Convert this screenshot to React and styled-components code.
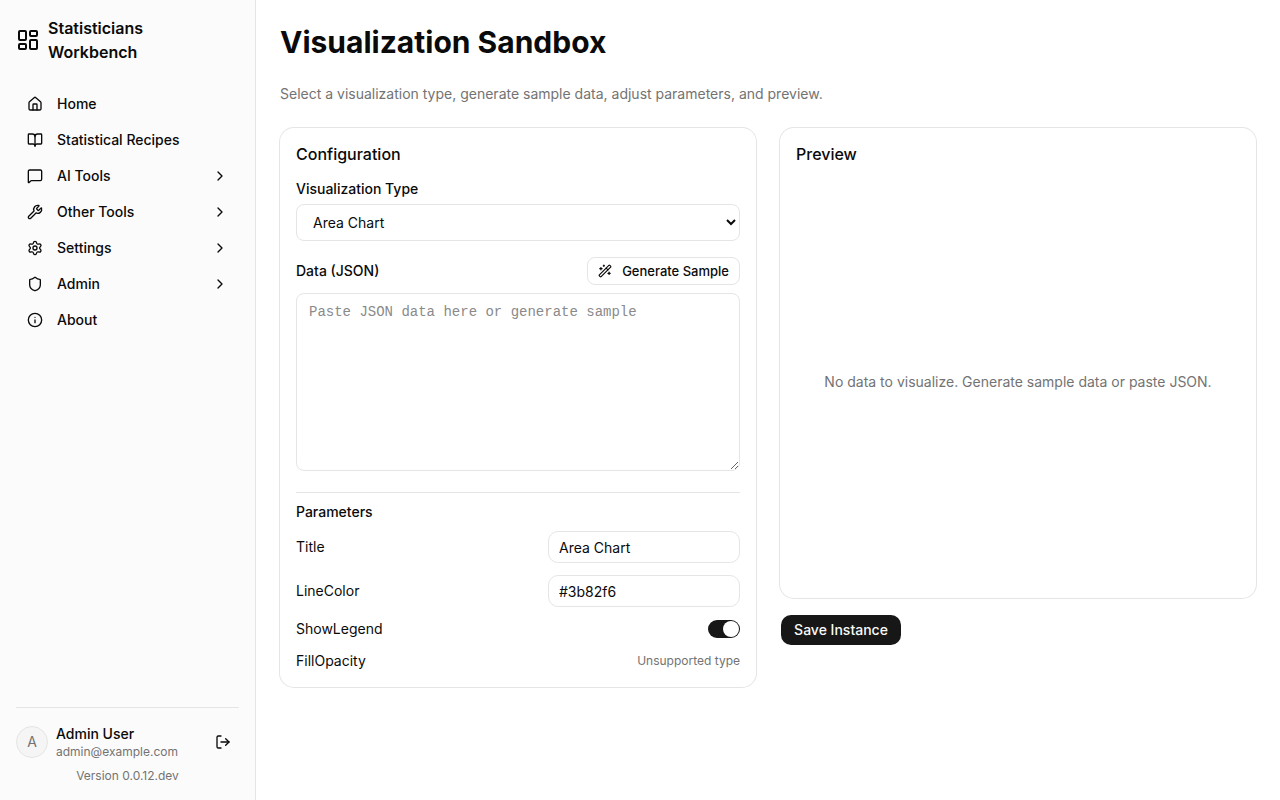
import { useState } from "react";
import styled, { createGlobalStyle } from "styled-components";
import {
  LayoutDashboard,
  House,
  BookOpen,
  MessageSquare,
  Wrench,
  Settings,
  Shield,
  Info,
  ChevronRight,
  LogOut,
  WandSparkles,
} from "lucide-react";

const GlobalStyle = createGlobalStyle`
  * {
    box-sizing: border-box;
  }
  body {
    margin: 0;
    background: #ffffff;
    color: #0a0a0a;
    font-family: Inter, "Liberation Sans", sans-serif;
    font-size: 14px;
    line-height: 20px;
  }
  button, input, select {
    font-family: inherit;
    color: inherit;
  }
`;

const Page = styled.div`
  display: flex;
  min-height: 100vh;
`;

const Sidebar = styled.aside`
  position: sticky;
  top: 0;
  width: 256px;
  height: 100vh;
  flex-shrink: 0;
  display: flex;
  flex-direction: column;
  padding: 16px;
  background: #fbfbfb;
  border-right: 1px solid #e5e5e5;
`;

const Brand = styled.a`
  display: flex;
  align-items: center;
  gap: 8px;
  padding-right: 32px;
  color: inherit;
  text-decoration: none;
  font-size: 16px;
  font-weight: 600;
  line-height: 24px;
  svg {
    flex-shrink: 0;
  }
`;

const Nav = styled.nav`
  display: flex;
  flex-direction: column;
  gap: 4px;
  margin-top: 24px;
`;

const NavLink = styled.a`
  display: flex;
  align-items: center;
  gap: 14px;
  height: 32px;
  padding: 0 11px;
  border-radius: 8px;
  color: inherit;
  text-decoration: none;
  font-weight: 500;
`;

const NavLabel = styled.span`
  flex: 1;
`;

const SidebarFooter = styled.div`
  margin-top: auto;
  padding-top: 16px;
  border-top: 1px solid #e5e5e5;
`;

const User = styled.div`
  display: flex;
  align-items: center;
  gap: 8px;
`;

const Avatar = styled.span`
  display: flex;
  align-items: center;
  justify-content: center;
  width: 32px;
  height: 32px;
  border: 1px solid #e5e5e5;
  border-radius: 50%;
  background: #f5f5f5;
  color: #737373;
`;

const UserInfo = styled.div`
  flex: 1;
  display: flex;
  flex-direction: column;
`;

const UserName = styled.span`
  font-weight: 500;
`;

const Muted = styled.span`
  color: #737373;
  font-size: 12px;
  line-height: 16px;
`;

const IconButton = styled.button`
  display: flex;
  align-items: center;
  justify-content: center;
  width: 32px;
  height: 32px;
  padding: 0;
  border: none;
  background: transparent;
  cursor: pointer;
`;

const Version = styled.div`
  margin-top: 8px;
  color: #737373;
  font-size: 12px;
  line-height: 16px;
  text-align: center;
`;

const Main = styled.main`
  flex: 1;
  min-width: 0;
  padding: 24px;
`;

const Title = styled.h1`
  margin: 0;
  font-size: 30px;
  font-weight: 700;
  line-height: 36px;
`;

const Subtitle = styled.p`
  margin: 24px 0;
  color: #737373;
`;

const Columns = styled.div`
  display: grid;
  grid-template-columns: 1fr 1fr;
  align-items: start;
  gap: 24px;
`;

const Card = styled.section`
  padding: 16px;
  border-radius: 14px;
  box-shadow: 0 0 0 1px #e5e5e5;
`;

const CardTitle = styled.h2`
  margin: 0;
  font-size: 16px;
  font-weight: 500;
  line-height: 20px;
`;

const Field = styled.div`
  display: flex;
  flex-direction: column;
  gap: ${(props) => props.$gap}px;
  margin-top: ${(props) => props.$top}px;
`;

const Label = styled.label`
  font-weight: 500;
`;

const Select = styled.select`
  width: 100%;
  height: 37px;
  padding: 0 0 0 12px;
  border: 1px solid #e5e5e5;
  border-radius: 8px;
  background: #ffffff;
  font-size: 14px;
`;

const FieldHeader = styled.div`
  display: flex;
  align-items: center;
  justify-content: space-between;
`;

const OutlineButton = styled.button`
  display: flex;
  align-items: center;
  gap: 10px;
  height: 28px;
  padding: 0 10px;
  border: 1px solid #e5e5e5;
  border-radius: 8px;
  background: #ffffff;
  font-size: 13px;
  font-weight: 500;
  cursor: pointer;
`;

const TextArea = styled.textarea`
  display: block;
  width: 100%;
  height: 178px;
  padding: 8px 12px;
  border: 1px solid #e5e5e5;
  border-radius: 8px;
  background: #ffffff;
  color: inherit;
  font-family: "Liberation Mono", monospace;
  font-size: 14px;
  line-height: 20px;
  resize: vertical;
  &::placeholder {
    color: #8a8a8a;
  }
`;

const Parameters = styled.div`
  display: flex;
  flex-direction: column;
  gap: 12px;
  margin-top: 21px;
  padding-top: 9px;
  border-top: 1px solid #e5e5e5;
`;

const ParametersTitle = styled.h3`
  margin: 0 0 -3px;
  font-size: 14px;
  font-weight: 500;
  line-height: 20px;
`;

const ParamRow = styled.div`
  display: flex;
  align-items: center;
  justify-content: space-between;
`;

const TextInput = styled.input`
  width: 192px;
  height: 32px;
  padding: 0 10px;
  border: 1px solid #e5e5e5;
  border-radius: 10px;
  background: #ffffff;
  font-size: 14px;
`;

const Switch = styled.input`
  appearance: none;
  display: flex;
  align-items: center;
  width: 32px;
  height: 18px;
  margin: 0;
  padding: 1px;
  border-radius: 9px;
  background: ${(props) => (props.checked ? "#171717" : "#e5e5e5")};
  justify-content: ${(props) => (props.checked ? "flex-end" : "flex-start")};
  cursor: pointer;
  &::before {
    content: "";
    width: 16px;
    height: 16px;
    border-radius: 50%;
    background: #ffffff;
  }
`;

const PreviewArea = styled.div`
  display: flex;
  align-items: center;
  justify-content: center;
  min-height: 400px;
  margin-top: 18px;
  color: #737373;
`;

const SaveButton = styled.button`
  min-width: 120px;
  height: 30px;
  margin: 17px 1px 0;
  padding: 0 10px;
  border: none;
  border-radius: 10px;
  background: #171717;
  color: #fafafa;
  font-size: 14px;
  font-weight: 500;
  line-height: 20px;
  cursor: pointer;
`;

const navItems = [
  { label: "Home", icon: House },
  { label: "Statistical Recipes", icon: BookOpen },
  { label: "AI Tools", icon: MessageSquare, nested: true },
  { label: "Other Tools", icon: Wrench, nested: true },
  { label: "Settings", icon: Settings, nested: true },
  { label: "Admin", icon: Shield, nested: true },
  { label: "About", icon: Info },
];

const App = () => {
  const [type, setType] = useState("Area Chart");
  const [data, setData] = useState("");
  const [title, setTitle] = useState("Area Chart");
  const [lineColor, setLineColor] = useState("#3b82f6");
  const [showLegend, setShowLegend] = useState(true);

  return (
    <>
      <GlobalStyle />
      <Page>
        <Sidebar>
          <Brand href="#">
            <LayoutDashboard size={24} />
            <span>Statisticians Workbench</span>
          </Brand>
          <Nav>
            {navItems.map(({ label, icon: Icon, nested }) => (
              <NavLink href="#" key={label}>
                <Icon size={16} />
                <NavLabel>{label}</NavLabel>
                {nested && <ChevronRight size={16} />}
              </NavLink>
            ))}
          </Nav>
          <SidebarFooter>
            <User>
              <Avatar>A</Avatar>
              <UserInfo>
                <UserName>Admin User</UserName>
                <Muted>admin@example.com</Muted>
              </UserInfo>
              <IconButton type="button" aria-label="Log out">
                <LogOut size={16} />
              </IconButton>
            </User>
            <Version>Version 0.0.12.dev</Version>
          </SidebarFooter>
        </Sidebar>
        <Main>
          <Title>Visualization Sandbox</Title>
          <Subtitle>
            Select a visualization type, generate sample data, adjust
            parameters, and preview.
          </Subtitle>
          <Columns>
            <Card>
              <CardTitle>Configuration</CardTitle>
              <Field $gap={5} $top={15}>
                <Label htmlFor="type">Visualization Type</Label>
                <Select
                  id="type"
                  value={type}
                  onChange={(e) => setType(e.target.value)}
                >
                  <option>Area Chart</option>
                </Select>
              </Field>
              <Field $gap={8} $top={16}>
                <FieldHeader>
                  <Label htmlFor="data">Data (JSON)</Label>
                  <OutlineButton type="button">
                    <WandSparkles size={14} />
                    Generate Sample
                  </OutlineButton>
                </FieldHeader>
                <TextArea
                  id="data"
                  placeholder="Paste JSON data here or generate sample"
                  value={data}
                  onChange={(e) => setData(e.target.value)}
                />
              </Field>
              <Parameters>
                <ParametersTitle>Parameters</ParametersTitle>
                <ParamRow>
                  <label htmlFor="title">Title</label>
                  <TextInput
                    id="title"
                    value={title}
                    onChange={(e) => setTitle(e.target.value)}
                  />
                </ParamRow>
                <ParamRow>
                  <label htmlFor="lineColor">LineColor</label>
                  <TextInput
                    id="lineColor"
                    value={lineColor}
                    onChange={(e) => setLineColor(e.target.value)}
                  />
                </ParamRow>
                <ParamRow>
                  <label htmlFor="showLegend">ShowLegend</label>
                  <Switch
                    id="showLegend"
                    type="checkbox"
                    checked={showLegend}
                    onChange={(e) => setShowLegend(e.target.checked)}
                  />
                </ParamRow>
                <ParamRow>
                  <span>FillOpacity</span>
                  <Muted>Unsupported type</Muted>
                </ParamRow>
              </Parameters>
            </Card>
            <div>
              <Card>
                <CardTitle>Preview</CardTitle>
                <PreviewArea>
                  No data to visualize. Generate sample data or paste JSON.
                </PreviewArea>
              </Card>
              <SaveButton type="button">Save Instance</SaveButton>
            </div>
          </Columns>
        </Main>
      </Page>
    </>
  );
};

export default App;
